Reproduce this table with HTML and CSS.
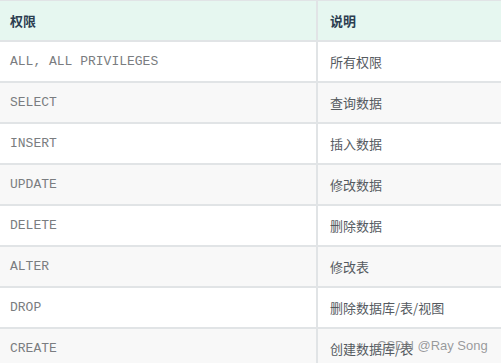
FILE: index.html
```html
<!DOCTYPE html>
<html lang="zh">
<head>
<meta charset="utf-8">
<link rel="stylesheet" href="styles.css">
</head>
<body>
<div class="table">
  <div class="row head"><div class="c1">权限</div><div class="c2">说明</div></div>
  <div class="row"><div class="c1 mono">ALL, ALL PRIVILEGES</div><div class="c2">所有权限</div></div>
  <div class="row alt"><div class="c1 mono">SELECT</div><div class="c2">查询数据</div></div>
  <div class="row"><div class="c1 mono">INSERT</div><div class="c2">插入数据</div></div>
  <div class="row alt"><div class="c1 mono">UPDATE</div><div class="c2">修改数据</div></div>
  <div class="row"><div class="c1 mono">DELETE</div><div class="c2">删除数据</div></div>
  <div class="row alt"><div class="c1 mono">ALTER</div><div class="c2">修改表</div></div>
  <div class="row"><div class="c1 mono">DROP</div><div class="c2">删除数据库/表/视图</div></div>
  <div class="row alt"><div class="c1 mono">CREATE</div><div class="c2">创建数据库/表</div></div>
</div>
<div class="watermark">CSDN @Ray Song</div>
</body>
</html>
```
FILE: styles.css
```css
html, body {
  margin: 0;
  padding: 0;
  background: #ffffff;
  overflow: hidden;
  width: 501px;
  height: 363px;
}
body {
  position: relative;
  font-family: "Noto Sans CJK SC", "Noto Sans", sans-serif;
  font-size: 13px;
  color: #555a5f;
}
.table {
  width: 501px;
  border-top: 1px solid #e1e4e6;
}
.row {
  display: flex;
  height: 39px;
  border-bottom: 2px solid #e1e4e6;
  background: #ffffff;
}
.row.alt {
  background: #f8f8f8;
}
.row.head {
  background: #e6f7f0;
  font-weight: bold;
  color: #2c3e50;
}
.c1, .c2 {
  display: flex;
  align-items: center;
  box-sizing: border-box;
}
.c1 {
  width: 318px;
  padding-left: 10px;
  border-right: 2px solid #e1e4e6;
}
.c2 {
  flex: 1;
  padding-left: 12px;
}
.mono {
  font-family: "Liberation Mono", "DejaVu Sans Mono", monospace;
  color: #7a7d80;
  font-size: 13px;
}
.watermark {
  position: absolute;
  left: 377px;
  top: 338px;
  font-family: "Liberation Sans", Arial, sans-serif;
  font-size: 13px;
  line-height: 16px;
  color: rgba(120, 122, 125, 0.75);
  white-space: nowrap;
}
```
